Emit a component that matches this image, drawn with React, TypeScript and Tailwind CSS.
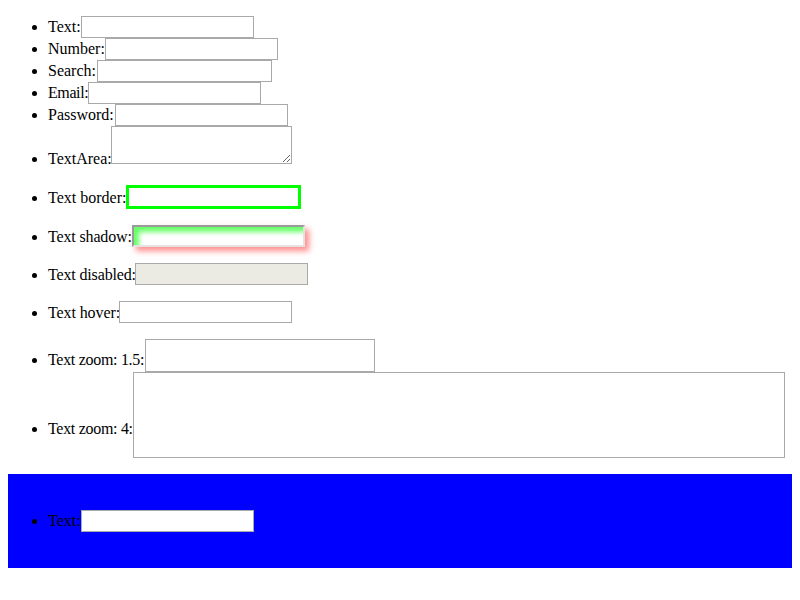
import React from "react";

const box = "block shrink-0 border border-solid border-[#a9a9a9] bg-white";

function Row({
  label,
  labelCls,
  className = "",
  children,
}: {
  label: string;
  labelCls: string;
  className?: string;
  children: React.ReactNode;
}) {
  return (
    <li className={className}>
      <span className="inline-flex items-start align-baseline">
        <span className={`shrink-0 whitespace-nowrap ${labelCls}`}>{label}</span>
        {children}
      </span>
    </li>
  );
}

export default function App() {
  return (
    <div
      className="min-h-[600px] bg-white px-2 pt-4 text-[16px] leading-[18px] text-black"
      style={{ fontFamily: '"Liberation Serif", "Times New Roman", serif' }}
    >
      <ul className="list-disc pl-10">
        <Row label="Text:" labelCls="mt-[2px] w-[33px]">
          <input type="text" className={`${box} h-[22px] w-[173px]`} />
        </Row>
        <Row label="Number:" labelCls="mt-[2px] w-[57px]">
          <input type="text" className={`${box} h-[22px] w-[173px]`} />
        </Row>
        <Row label="Search:" labelCls="mt-[2px] w-[49px]">
          <input type="text" className={`${box} h-[22px] w-[175px]`} />
        </Row>
        <Row label="Email:" labelCls="mt-[2px] w-[40px] tracking-[-0.4px]">
          <input type="text" className={`${box} h-[22px] w-[173px]`} />
        </Row>
        <Row label="Password:" labelCls="mt-[2px] w-[67px]">
          <input type="password" className={`${box} h-[22px] w-[173px]`} />
        </Row>
        <Row label="TextArea:" labelCls="mt-[24px] w-[63px]">
          <textarea className={`${box} h-[38px] w-[181px] resize`} />
        </Row>
        <Row label="Text border:" labelCls="mt-[4px] w-[78px]" className="mt-[17px]">
          <input
            type="text"
            className="block h-[24px] w-[175px] shrink-0 border-[3px] border-solid border-[#00ff00] bg-white"
          />
        </Row>
        <Row label="Text shadow:" labelCls="mt-[3px] w-[84px] tracking-[-0.15px]" className="mt-[16px]">
          <input
            type="text"
            className="block h-[22px] w-[173px] shrink-0 border-2 border-solid border-t-[#9a9a9a] border-l-[#9a9a9a] border-r-[#e3e3e3] border-b-[#e3e3e3] bg-white shadow-[inset_5px_5px_5px_rgba(0,255,0,0.6),4px_4px_6px_rgba(255,110,110,0.8)]"
          />
        </Row>
        <Row label="Text disabled:" labelCls="mt-[3px] w-[87px] tracking-[-0.15px]" className="mt-[16px]">
          <input
            type="text"
            disabled
            className="block h-[22px] w-[173px] shrink-0 border border-solid border-[#a9a9a9] bg-[#ebeae3]"
          />
        </Row>
        <Row label="Text hover:" labelCls="mt-[3px] w-[71px] tracking-[-0.1px]" className="mt-[16px]">
          <input type="text" className={`${box} h-[22px] w-[173px]`} />
        </Row>
        <Row label="Text zoom: 1.5:" labelCls="mt-[12px] w-[97px] tracking-[-0.3px]" className="mt-[16px]">
          <input type="text" className={`${box} h-[33px] w-[230px]`} />
        </Row>
        <Row label="Text zoom: 4:" labelCls="mt-[48px] w-[85px] tracking-[-0.3px]">
          <input type="text" className={`${box} h-[86px] w-[652px]`} />
        </Row>
      </ul>
      <div className="mt-4 bg-[#0000ff] py-9">
        <ul className="list-disc pl-10">
          <Row label="Text:" labelCls="mt-[2px] w-[33px]">
            <input type="text" className={`${box} h-[22px] w-[173px]`} />
          </Row>
        </ul>
      </div>
    </div>
  );
}
